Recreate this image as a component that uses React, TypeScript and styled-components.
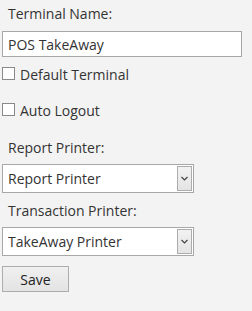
import React from "react";
import styled, { createGlobalStyle } from "styled-components";

const GlobalStyle = createGlobalStyle`
  html, body {
    margin: 0;
    padding: 0;
    background: #f3f3f3;
  }
  body {
    font-family: "Open Sans", "Noto Sans", sans-serif;
    color: #333333;
  }
`;

const Form = styled.div`
  display: flex;
  flex-direction: column;
  align-items: flex-start;
  padding: 4px 0 0 2px;
  width: 250px;
  box-sizing: border-box;
`;

const FieldLabel = styled.div<{ $top?: number }>`
  font-size: 14px;
  line-height: 20px;
  padding-left: 6px;
  margin-top: ${(p) => p.$top ?? 0}px;
  margin-bottom: 6px;
`;

const TextInput = styled.input`
  width: 240px;
  height: 26px;
  margin-top: 1px;
  box-sizing: border-box;
  border: 1px solid #a8a8a8;
  background: #ffffff;
  padding: 0 5px;
  font-family: inherit;
  font-size: 14px;
  color: #333333;
  outline: none;
`;

const CheckRow = styled.label<{ $top: number }>`
  display: flex;
  align-items: center;
  gap: 5px;
  margin-top: ${(p) => p.$top}px;
  font-size: 14px;
  line-height: 20px;
`;

const CheckBox = styled.input`
  appearance: none;
  margin: 0;
  width: 13px;
  height: 13px;
  box-sizing: border-box;
  border: 1px solid #8a8a8a;
  background: #ffffff;
  margin-top: -4px;
`;

const SelectBox = styled.div`
  display: flex;
  align-items: stretch;
  width: 192px;
  height: 29px;
  box-sizing: border-box;
  border: 1px solid #a8a8a8;
  background: #ffffff;
`;

const NativeSelect = styled.select`
  appearance: none;
  flex: 1;
  border: none;
  outline: none;
  background: transparent;
  font-family: inherit;
  font-size: 14px;
  color: #333333;
  padding: 0 5px;
`;

const ArrowButton = styled.div`
  width: 15px;
  margin: 1px 1px 1px 0;
  box-sizing: border-box;
  border: 1px solid #acacac;
  background: linear-gradient(#f2f2f2, #e4e4e4);
  display: flex;
  align-items: center;
  justify-content: center;
`;

const SaveButton = styled.button`
  margin-top: 10px;
  width: 67px;
  height: 26px;
  border: 1px solid #adadad;
  background: linear-gradient(#f0f0f0, #e3e3e3);
  font-family: inherit;
  font-size: 14px;
  color: #222222;
  padding: 0;
`;

const Chevron = () => (
  <svg width="7" height="5" viewBox="0 0 7 5">
    <path d="M0.5 1 L3.5 4 L6.5 1" fill="none" stroke="#444" strokeWidth="1.2" />
  </svg>
);

const PrinterSelect = ({ value }: { value: string }) => (
  <SelectBox>
    <NativeSelect defaultValue={value}>
      <option>{value}</option>
    </NativeSelect>
    <ArrowButton>
      <Chevron />
    </ArrowButton>
  </SelectBox>
);

const App = () => {
  return (
    <>
      <GlobalStyle />
      <Form>
        <FieldLabel>Terminal Name:</FieldLabel>
        <TextInput defaultValue="POS TakeAway" />
        <CheckRow $top={8}>
          <CheckBox type="checkbox" />
          Default Terminal
        </CheckRow>
        <CheckRow $top={16}>
          <CheckBox type="checkbox" />
          Auto Logout
        </CheckRow>
        <FieldLabel $top={17}>Report Printer:</FieldLabel>
        <PrinterSelect value="Report Printer" />
        <FieldLabel $top={8}>Transaction Printer:</FieldLabel>
        <PrinterSelect value="TakeAway Printer" />
        <SaveButton>Save</SaveButton>
      </Form>
    </>
  );
};

export default App;
